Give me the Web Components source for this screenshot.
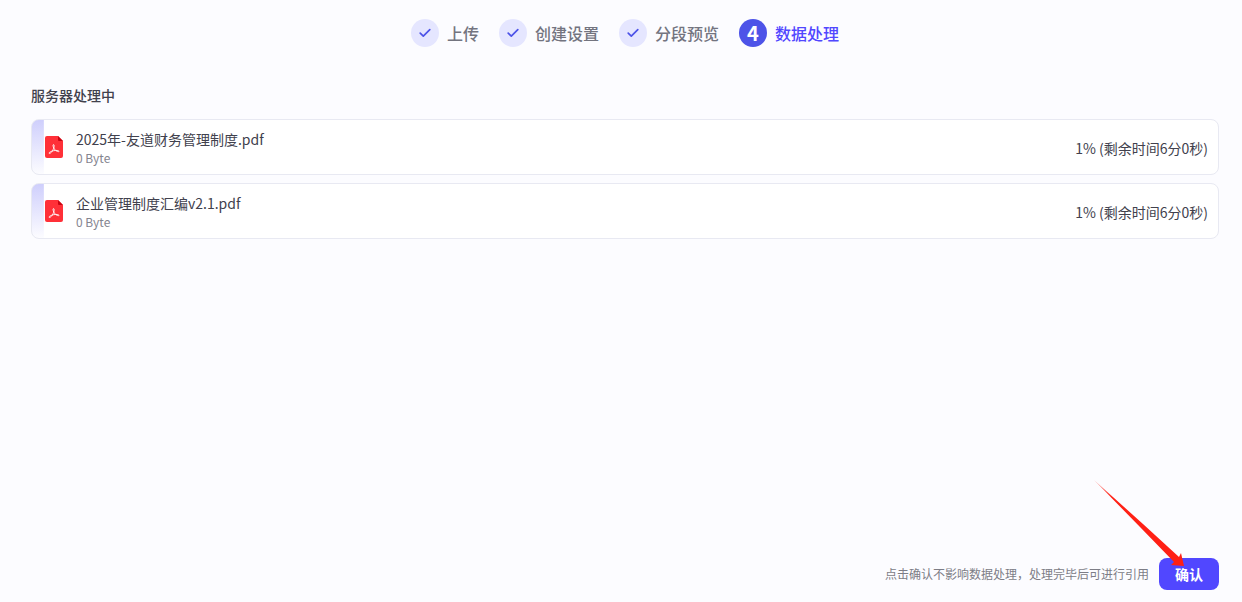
<!DOCTYPE html>
<html lang="zh-CN">
<head>
<meta charset="utf-8">
<title>数据处理</title>
<style>
  body {
    margin: 0;
    background: #fcfcff;
    color: #41414d;
    font-family: "Noto Sans CJK SC", sans-serif;
    font-size: 14px;
    line-height: 22px;
  }
</style>
</head>
<body>
<upload-page></upload-page>
<script>
  class StepItem extends HTMLElement {
    constructor() {
      super();
      this.attachShadow({ mode: 'open' });
    }

    connectedCallback() {
      const number = this.getAttribute('number');
      const icon = this.hasAttribute('active') ? number : `
        <svg width="14" height="14" viewBox="0 0 14 14" fill="none" aria-hidden="true">
          <path d="M2.2 7.2 5.3 10.2 11.8 3.6" stroke="#4d53e8" stroke-width="1.7" stroke-linecap="round" stroke-linejoin="round"/>
        </svg>`;
      this.shadowRoot.innerHTML = `
        <style>
          :host {
            display: flex;
            align-items: center;
            gap: 8px;
            color: #73747f;
            font-size: 16px;
            font-weight: 500;
            line-height: 22px;
          }

          :host([active]) {
            color: #5147ff;
          }

          .mark {
            display: flex;
            align-items: center;
            justify-content: center;
            width: 28px;
            height: 28px;
            border-radius: 50%;
            background: #e5e6ff;
            color: white;
            font-size: 20px;
            font-weight: 600;
          }

          :host([active]) .mark {
            background: #4d53e8;
          }
        </style>
        <span class="mark">${icon}</span>
        <span><slot></slot></span>
      `;
    }
  }

  class FileRow extends HTMLElement {
    constructor() {
      super();
      this.attachShadow({ mode: 'open' });
    }

    connectedCallback() {
      const percent = this.getAttribute('percent');
      this.shadowRoot.innerHTML = `
        <style>
          :host {
            display: flex;
            align-items: center;
            gap: 10px;
            box-sizing: border-box;
            min-height: 56px;
            padding: 8px 10px;
            border: 1px solid #e8e9f2;
            border-radius: 8px;
            background: linear-gradient(#cfcffc, #fcfcff) left / ${percent}% 100% no-repeat white;
          }

          svg {
            flex: none;
          }

          .info {
            flex: 1;
            min-width: 0;
          }

          .size {
            color: #85858f;
            font-size: 12px;
            line-height: 16px;
          }

          .status {
            padding-top: 2px;
          }
        </style>
        <svg width="24" height="24" viewBox="0 0 24 24" fill="none" aria-hidden="true">
          <path d="M5 1H16L21 6V21Q21 23 19 23H5Q3 23 3 21V3Q3 1 5 1Z" fill="#ff3038"/>
          <path d="M16 1 21 6H17Q16 6 16 5Z" fill="#c90512"/>
          <path d="M11.4 9.6C12.5 9.4 12.3 11.8 11.6 13.5 10.7 15.8 8.4 19.1 7.2 18.4 6.4 17.6 8.8 16.3 11.5 15.7 14.2 15.2 17 15.4 17 16.3 16.8 17.3 14 16.2 12.6 14.4 11.4 12.8 10.5 9.9 11.4 9.6Z" stroke="white" stroke-width="0.9" stroke-linejoin="round"/>
        </svg>
        <div class="info">
          <div><slot></slot></div>
          <div class="size">${this.getAttribute('size')}</div>
        </div>
        <div class="status"><slot name="status"></slot></div>
      `;
    }
  }

  class ConfirmBar extends HTMLElement {
    constructor() {
      super();
      this.attachShadow({ mode: 'open' });
    }

    connectedCallback() {
      this.shadowRoot.innerHTML = `
        <style>
          :host {
            display: flex;
            align-items: center;
            justify-content: flex-end;
            gap: 10px;
            color: #7d7d86;
            font-size: 12px;
          }

          .action {
            position: relative;
            display: flex;
          }

          button {
            height: 32px;
            padding: 0 16px;
            border: none;
            border-radius: 8px;
            background: #5147ff;
            color: white;
            font: 600 14px/22px "Noto Sans CJK SC", sans-serif;
            cursor: pointer;
          }

          /* pointer arrow lies over the button */
          svg {
            position: absolute;
            right: 32px;
            bottom: 22px;
            pointer-events: none;
          }
        </style>
        <span><slot></slot></span>
        <div class="action">
          <button type="button">确认</button>
          <svg width="96" height="90" viewBox="0 0 96 90" aria-hidden="true">
            <defs>
              <linearGradient id="fade" x1="0" y1="0" x2="1" y2="1">
                <stop offset="0" stop-color="#ff2015" stop-opacity="0.3"/>
                <stop offset="0.2" stop-color="#ff2015"/>
              </linearGradient>
            </defs>
            <path d="M3 2 52 46 88 79 90 75 93 88 80 87 83 84 49 49Z" fill="url(#fade)"/>
          </svg>
        </div>
      `;
    }
  }

  class UploadPage extends HTMLElement {
    constructor() {
      super();
      this.attachShadow({ mode: 'open' });
    }

    connectedCallback() {
      this.shadowRoot.innerHTML = `
        <style>
          :host {
            display: flex;
            flex-direction: column;
            box-sizing: border-box;
            min-height: 100vh;
            padding: 19px 23px 12px 31px;
          }

          nav {
            display: flex;
            flex-wrap: wrap;
            justify-content: center;
            gap: 20px;
          }

          main {
            flex: 1;
            padding: 37px 0 16px;
          }

          h1 {
            margin: 0 0 13px;
            font-size: 14px;
            font-weight: 500;
            line-height: 22px;
          }

          .files {
            display: flex;
            flex-direction: column;
            gap: 8px;
          }
        </style>
        <nav>
          <step-item number="1">上传</step-item>
          <step-item number="2">创建设置</step-item>
          <step-item number="3">分段预览</step-item>
          <step-item number="4" active>数据处理</step-item>
        </nav>
        <main>
          <h1>服务器处理中</h1>
          <div class="files">
            <file-row percent="1" size="0 Byte">2025年-友道财务管理制度.pdf<span slot="status">1% (剩余时间6分0秒)</span></file-row>
            <file-row percent="1" size="0 Byte">企业管理制度汇编v2.1.pdf<span slot="status">1% (剩余时间6分0秒)</span></file-row>
          </div>
        </main>
        <confirm-bar>点击确认不影响数据处理，处理完毕后可进行引用</confirm-bar>
      `;
    }
  }

  customElements.define('step-item', StepItem);
  customElements.define('file-row', FileRow);
  customElements.define('confirm-bar', ConfirmBar);
  customElements.define('upload-page', UploadPage);
</script>
</body>
</html>
